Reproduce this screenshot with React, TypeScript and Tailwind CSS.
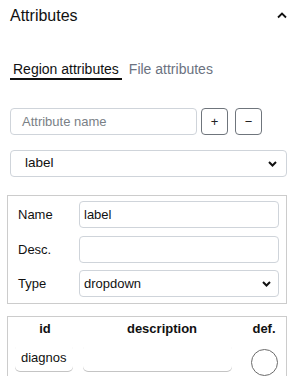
import React from "react";

const font = { fontFamily: '"Liberation Sans", Arial, Helvetica, sans-serif' };

function Chevron() {
  return (
    <svg width="10" height="7" viewBox="0 0 10 7" className="block">
      <polyline points="1,5.5 5,1.5 9,5.5" fill="none" stroke="#111" strokeWidth="1.8" />
    </svg>
  );
}

function SelectArrow() {
  return (
    <svg width="9" height="6" viewBox="0 0 9 6" className="block">
      <polyline points="1,1 4.5,4.5 8,1" fill="none" stroke="#111" strokeWidth="2" />
    </svg>
  );
}

export default function App() {
  return (
    <div className="w-[295px] h-[376px] overflow-hidden bg-white text-[#111]" style={font}>
      {/* Header */}
      <div className="flex items-center justify-between pl-[10px] pr-[8px] pt-[4px] h-[28px]">
        <span className="text-[16px] leading-6">Attributes</span>
        <div className="mt-[-2px]">
          <Chevron />
        </div>
      </div>

      {/* Tabs */}
      <div className="flex gap-[7px] pl-[10px] mt-[33px] h-[19px]">
        <div className="px-[3px] text-[14px] leading-[17px] border-b-2 border-[#111] text-[#111]">
          Region attributes
        </div>
        <div className="px-0 text-[14px] leading-[17px] text-[#6b7280]">File attributes</div>
      </div>

      {/* Attribute name row */}
      <div className="flex items-center pl-[10px] mt-[28px] h-[27px]">
        <div className="w-[187px] h-[27px] border border-[#cfd4da] rounded-[4px] flex items-center pl-[11px] text-[13px] text-[#7a7f86]">
          Attribute name
        </div>
        <button className="ml-[4px] w-[27px] h-[27px] border border-[#6f757c] rounded-[4px] flex items-center justify-center text-[13px] text-[#222]">
          +
        </button>
        <button className="ml-[7px] w-[27px] h-[27px] border border-[#6f757c] rounded-[4px] flex items-center justify-center text-[13px] text-[#222]">
          −
        </button>
      </div>

      {/* Attribute select */}
      <div className="ml-[10px] mt-[15px] w-[277px] h-[27px] border border-[#cfd4da] rounded-[4px] flex items-center justify-between pl-[14px] pr-[9px] text-[13.5px]">
        <span>label</span>
        <SelectArrow />
      </div>

      {/* Attribute properties box */}
      <div className="ml-[7px] mt-[18px] w-[280px] h-[109px] border border-[#cccccc] pt-[5px] pl-[10px] pr-[7px] text-[13px]">
        <div className="flex items-center h-[27px]">
          <span className="w-[61px]">Name</span>
          <div className="w-[200px] h-[27px] border border-[#cfd4da] rounded-[4px] flex items-center pl-[4px]">
            label
          </div>
        </div>
        <div className="flex items-center h-[27px] mt-[8px]">
          <span className="w-[61px]">Desc.</span>
          <div className="w-[200px] h-[27px] border border-[#cfd4da] rounded-[4px]" />
        </div>
        <div className="flex items-center h-[27px] mt-[7px]">
          <span className="w-[61px]">Type</span>
          <div className="w-[200px] h-[27px] border border-[#cfd4da] rounded-[4px] flex items-center justify-between pl-[4px] pr-[7px]">
            <span>dropdown</span>
            <SelectArrow />
          </div>
        </div>
      </div>

      {/* Options table */}
      <div className="ml-[7px] mt-[12px] w-[280px] h-[80px] border border-[#cccccc] pl-[7px] text-[13px]">
        <div className="grid grid-cols-[58px_149px_1fr] gap-x-[10px] pt-[4px] font-bold leading-4">
          <div className="text-center pl-[2px]">id</div>
          <div className="text-center pl-[9px]">description</div>
          <div className="text-center">def.</div>
        </div>
        <div className="grid grid-cols-[58px_149px_1fr] gap-x-[10px] mt-[7px] items-start">
          <div className="h-[27px] rounded-[5px] shadow-[0_1px_0_#c4c4c4] flex items-center pl-[6px]">diagnos</div>
          <div className="h-[27px] rounded-[5px] shadow-[0_1px_0_#c4c4c4]" />
          <div className="flex justify-center mt-[5px]">
            <div className="w-[27px] h-[27px] rounded-full border border-[#6b6b6b]" />
          </div>
        </div>
      </div>
    </div>
  );
}
